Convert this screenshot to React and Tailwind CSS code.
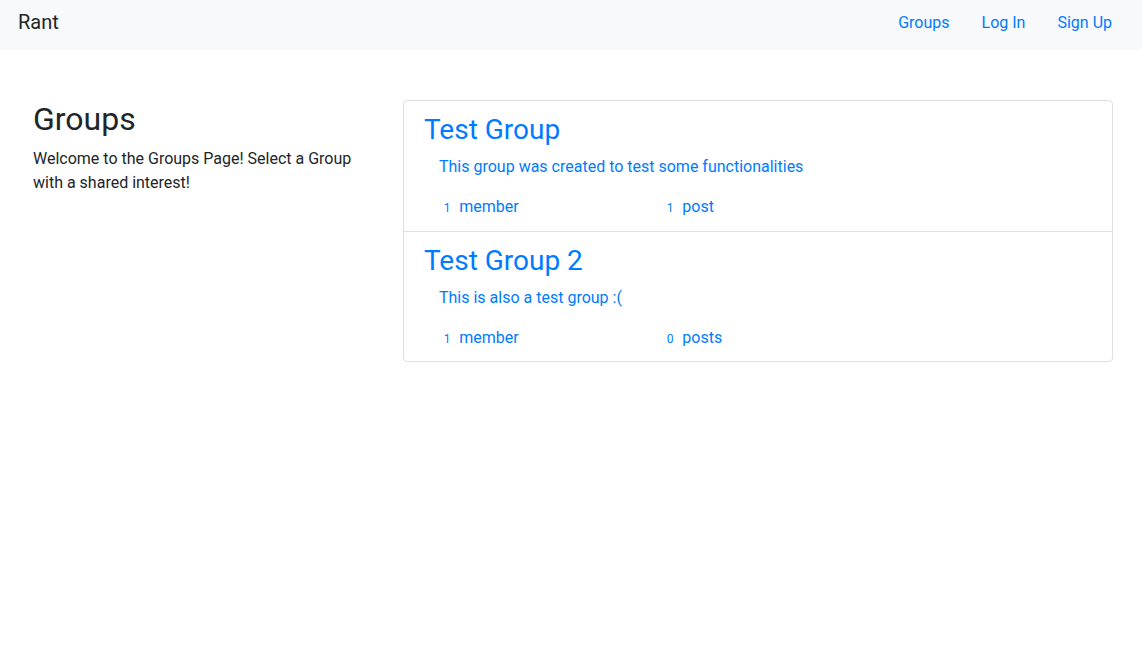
import React from 'react';

const groups = [
  {
    name: 'Test Group',
    description: 'This group was created to test some functionalities',
    members: 1,
    posts: 1,
  },
  {
    name: 'Test Group 2',
    description: 'This is also a test group :(',
    members: 1,
    posts: 0,
  },
];

function Count({ n, label }) {
  return (
    <div className="w-[223px]">
      <span className="inline-block px-[4.8px] text-[12px] font-normal leading-none align-baseline">{n}</span>{' '}
      {label}
    </div>
  );
}

export default function App() {
  return (
    <div className="min-h-screen bg-white text-[#212529] text-base leading-6" style={{ fontFamily: 'Roboto, "Liberation Sans", sans-serif' }}>
      {/* Navbar */}
      <nav className="h-[50px] bg-[#f8f9fa] flex items-start justify-between pl-[18px] pr-[30px]">
        <a href="#" className="pt-[7px] text-[20px] leading-[30px] text-[#212529]">Rant</a>
        <div className="flex gap-8 pt-[11px] text-[#007bff]">
          <a href="#">Groups</a>
          <a href="#">Log In</a>
          <a href="#">Sign Up</a>
        </div>
      </nav>

      {/* Content */}
      <main className="flex gap-[30px] pl-[33px] pr-[29px] mt-[50px]">
        <div className="w-[340px] shrink-0">
          <h2 className="text-[32px] leading-[1.2] mb-[9px]">Groups</h2>
          <p>Welcome to the Groups Page! Select a Group with a shared interest!</p>
        </div>

        <div className="flex-1 border border-black/[0.125] rounded self-start">
          {groups.map((g, i) => (
            <a
              key={g.name}
              href="#"
              className={`block px-5 text-[#007bff] ${i > 0 ? 'border-t border-black/[0.125] pt-[12.5px] pb-[11.5px]' : 'pt-3 pb-3'}`}
            >
              <h3 className="text-[28px] leading-[1.2] mb-2">{g.name}</h3>
              <p className="ml-[15px] mb-4">{g.description}</p>
              <div className="flex ml-[15px]">
                <Count n={g.members} label={g.members === 1 ? 'member' : 'members'} />
                <Count n={g.posts} label={g.posts === 1 ? 'post' : 'posts'} />
              </div>
            </a>
          ))}
        </div>
      </main>
    </div>
  );
}
